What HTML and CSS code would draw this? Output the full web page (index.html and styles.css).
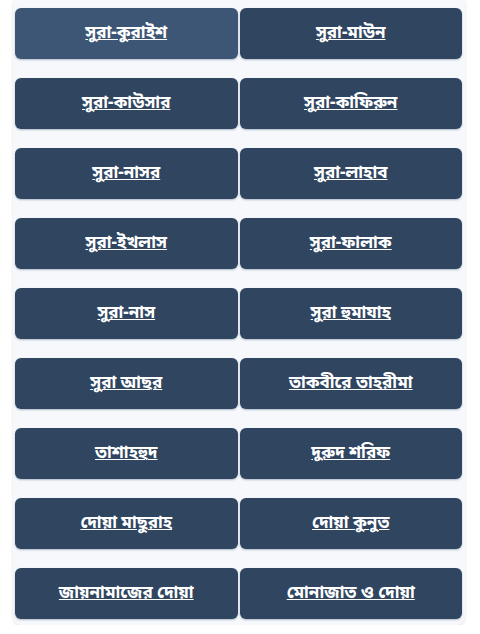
FILE: index.html
```html
<!DOCTYPE html>
<html lang="bn">
<head>
<meta charset="utf-8">
<link rel="stylesheet" href="styles.css">
</head>
<body>
<div class="panel">
  <div class="grid">
    <a class="btn active" href="#">সুরা-কুরাইশ</a>
    <a class="btn" href="#">সুরা-মাউন</a>
    <a class="btn" href="#">সুরা-কাউসার</a>
    <a class="btn" href="#">সুরা-কাফিরুন</a>
    <a class="btn" href="#">সুরা-নাসর</a>
    <a class="btn" href="#">সুরা-লাহাব</a>
    <a class="btn" href="#">সুরা-ইখলাস</a>
    <a class="btn" href="#">সুরা-ফালাক</a>
    <a class="btn" href="#">সুরা-নাস</a>
    <a class="btn" href="#">সুরা হুমাযাহ</a>
    <a class="btn" href="#">সুরা আছর</a>
    <a class="btn" href="#">তাকবীরে তাহরীমা</a>
    <a class="btn" href="#">তাশাহহুদ</a>
    <a class="btn" href="#">দুরুদ শরিফ</a>
    <a class="btn" href="#">দোয়া মাছুরাহ</a>
    <a class="btn" href="#">দোয়া কুনুত</a>
    <a class="btn" href="#">জায়নামাজের দোয়া</a>
    <a class="btn" href="#">মোনাজাত ও দোয়া</a>
  </div>
</div>
</body>
</html>
```
FILE: styles.css
```css
html, body {
  margin: 0;
  padding: 0;
  background: #ffffff;
}
body {
  font-family: "Noto Sans Bengali", "Noto Serif Bengali", "Lohit Bengali", "Noto Sans", sans-serif;
}
.panel {
  margin-left: 13px;
  width: 452px;
  box-sizing: border-box;
  background: #f6f8fb;
  padding: 8px 3px 6px 2px;
  border-radius: 0 0 8px 8px;
  box-shadow: 0 1px 3px rgba(0,0,0,0.12);
}
.grid {
  display: grid;
  grid-template-columns: 1fr 1fr;
  column-gap: 2px;
  row-gap: 19px;
}
.btn {
  display: flex;
  align-items: center;
  justify-content: center;
  height: 51px;
  background: #2f4560;
  color: #ffffff;
  font-size: 17px;
  font-weight: bold;
  border-radius: 6px;
  text-decoration: underline;
  text-decoration-thickness: 1px;
  text-underline-offset: 1px;
  box-shadow: 0 1px 2px rgba(40,70,110,0.35);
}
.btn.active {
  background: #3d5676;
}
```
